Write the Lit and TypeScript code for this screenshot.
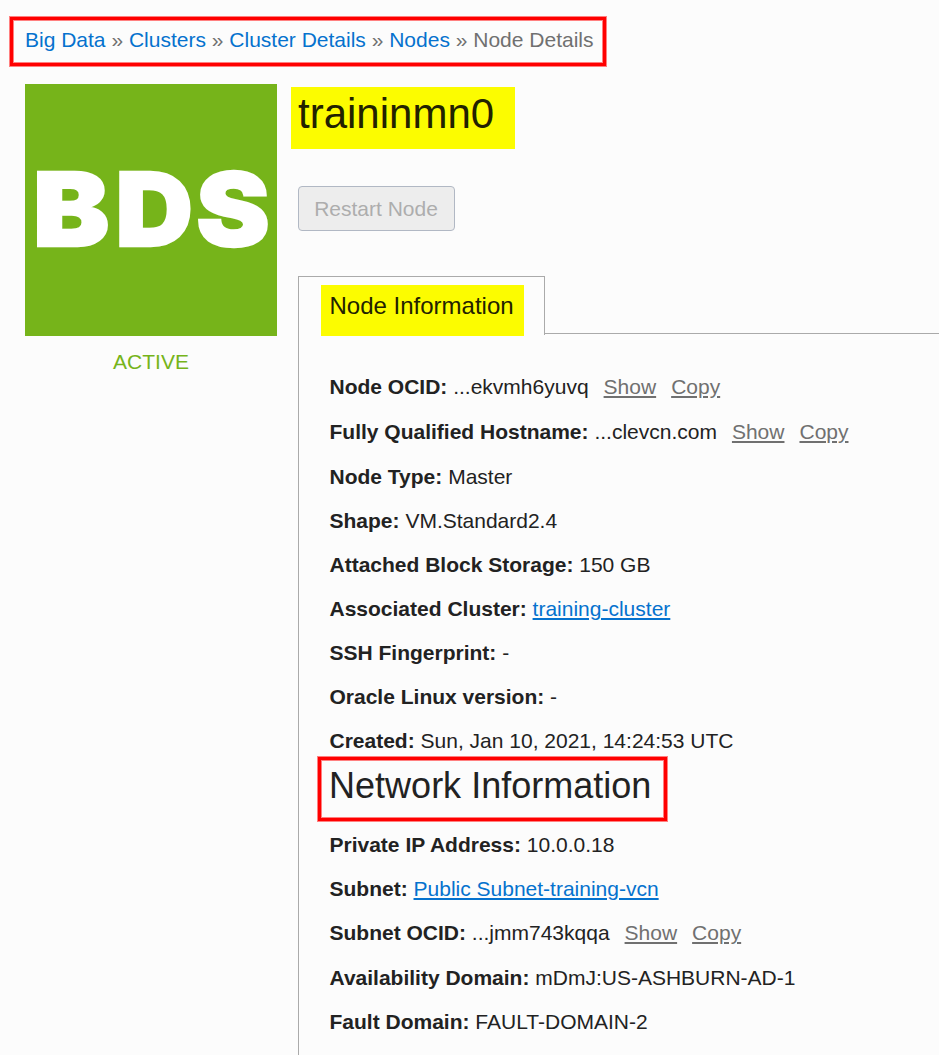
import { LitElement, html, css } from "lit";
import { customElement, property } from "lit/decorators.js";

@customElement("detail-row")
class DetailRow extends LitElement {
  @property() label = "";
  @property() value = "";
  @property({ type: Boolean }) link = false;
  @property({ type: Boolean }) masked = false;

  static styles = css`
    :host { display: block; height: 44.1px; line-height: 30px; white-space: nowrap; color: #222; }
    :host([masked]) { height: 44.8px; }
    .label { font-weight: 700; }
    .link, .action { text-decoration: underline; text-decoration-thickness: 2px; text-underline-offset: 2px; }
    .link { color: #0572ce; }
    .action { color: #707070; margin-left: 15px; }
  `;

  render() {
    return html`<span class="label">${this.label}:</span> ${this.link
      ? html`<a class="link">${this.value}</a>`
      : html`<span>${this.value}</span>`}${this.masked
      ? html`<a class="action">Show</a><a class="action">Copy</a>`
      : ""}`;
  }
}

@customElement("app-root")
class AppRoot extends LitElement {
  static styles = css`
    :host {
      display: block; box-sizing: border-box; width: 100%; height: 1055px; overflow: hidden;
      background: #fcfcfc; color: #222; font: 21px "Liberation Sans", Arial, sans-serif;
    }
    .crumbs {
      box-sizing: border-box; width: 596px; height: 49px; margin: 17px 0 0 10px;
      border: 3px solid #f00; padding: 0 0 0 12px;
      box-shadow: 0 0 0 1px #ff8080, inset 0 0 0 1px #ff8080;
      line-height: 40px; white-space: nowrap; color: #707070;
    }
    .page { display: flow-root; }
    .crumbs a { color: #0572ce; }
    .columns { display: flex; margin: 18px 0 0 25px; }
    .side { width: 252px; flex: none; text-align: center; color: #76b41a; }
    .logo { display: block; background: #76b41a; margin-bottom: 11px; }
    .logo text {
      font-family: Inter, "Liberation Sans", sans-serif; font-weight: 900; font-size: 102px;
      fill: #fff; stroke: #fff; stroke-width: 2.4px; stroke-linejoin: miter;
    }
    .status { line-height: 30px; }
    .main { flex: 1; min-width: 0; margin-left: 14px; padding-top: 3px; }
    .title {
      box-sizing: border-box; width: 224px; height: 62px; margin: 0; padding-left: 7px;
      background: #fcfc00; color: #222200; font-size: 42px; font-weight: 400; line-height: 54px;
    }
    .restart {
      display: block; box-sizing: border-box; width: 157px; height: 45px; margin: 37px 0 45px 7px;
      padding: 0 1px 0 0; border: 1px solid #b1b8c4; border-radius: 4px; background: #ededed;
      color: #adadad; font: inherit;
    }
    .tabs { display: flex; margin-left: 7px; height: 58px; }
    .tab {
      box-sizing: border-box; width: 247px; height: 59px; border: 1px solid #aaa; border-bottom: 0;
      padding: 8px 0 0 22px;
    }
    .rest { flex: 1; border-bottom: 1px solid #aaa; box-sizing: border-box; }
    .mark {
      width: 203px; height: 51px; background: #fcfc00; color: #222200; padding-left: 8.5px;
      box-sizing: border-box; font-size: 24px; line-height: 42px;
    }
    .panel { margin-left: 7px; border-left: 1px solid #aaa; padding: 38px 0 0 30.5px; height: 720px; }
    .section {
      box-sizing: border-box; width: 349px; height: 64px; margin: -13px 0 9px -12px;
      border: 3px solid #f00; padding-left: 8.6px;
      box-shadow: 0 0 0 1px #ff8080, inset 0 0 0 1px #ff8080;
      font-size: 36px; font-weight: 400; line-height: 51px; white-space: nowrap;
    }
  `;

  private node = [
    { label: "Node OCID", value: "...ekvmh6yuvq", masked: true },
    { label: "Fully Qualified Hostname", value: "...clevcn.com", masked: true },
    { label: "Node Type", value: "Master" },
    { label: "Shape", value: "VM.Standard2.4" },
    { label: "Attached Block Storage", value: "150 GB" },
    { label: "Associated Cluster", value: "training-cluster", link: true },
    { label: "SSH Fingerprint", value: "-" },
    { label: "Oracle Linux version", value: "-" },
    { label: "Created", value: "Sun, Jan 10, 2021, 14:24:53 UTC" },
  ];

  private network = [
    { label: "Private IP Address", value: "10.0.0.18" },
    { label: "Subnet", value: "Public Subnet-training-vcn", link: true },
    { label: "Subnet OCID", value: "...jmm743kqqa", masked: true },
    { label: "Availability Domain", value: "mDmJ:US-ASHBURN-AD-1" },
    { label: "Fault Domain", value: "FAULT-DOMAIN-2" },
  ];

  private rows(items: { label: string; value: string; link?: boolean; masked?: boolean }[]) {
    return items.map(
      (r) => html`<detail-row .label=${r.label} .value=${r.value} ?link=${r.link} ?masked=${r.masked}></detail-row>`
    );
  }

  render() {
    return html`<div class="page">
      <nav class="crumbs"><a>Big Data</a> » <a>Clusters</a> » <a>Cluster Details</a> » <a>Nodes</a> » Node Details</nav>
      <div class="columns">
        <aside class="side">
          <svg class="logo" width="252" height="252" viewBox="0 0 252 252">
            <text transform="translate(8 162) scale(1.12 1)">B</text>
            <text transform="translate(90.5 162) scale(1.05 1)">D</text>
            <text transform="translate(171.3 162) scale(1.08 1)">S</text>
          </svg>
          <div class="status">ACTIVE</div>
        </aside>
        <main class="main">
          <h1 class="title">traininmn0</h1>
          <button class="restart" disabled>Restart Node</button>
          <div class="tabs">
            <div class="tab"><div class="mark">Node Information</div></div>
            <div class="rest"></div>
          </div>
          <section class="panel">
            ${this.rows(this.node)}
            <h2 class="section">Network Information</h2>
            ${this.rows(this.network)}
          </section>
        </main>
      </div>
    </div>`;
  }
}
